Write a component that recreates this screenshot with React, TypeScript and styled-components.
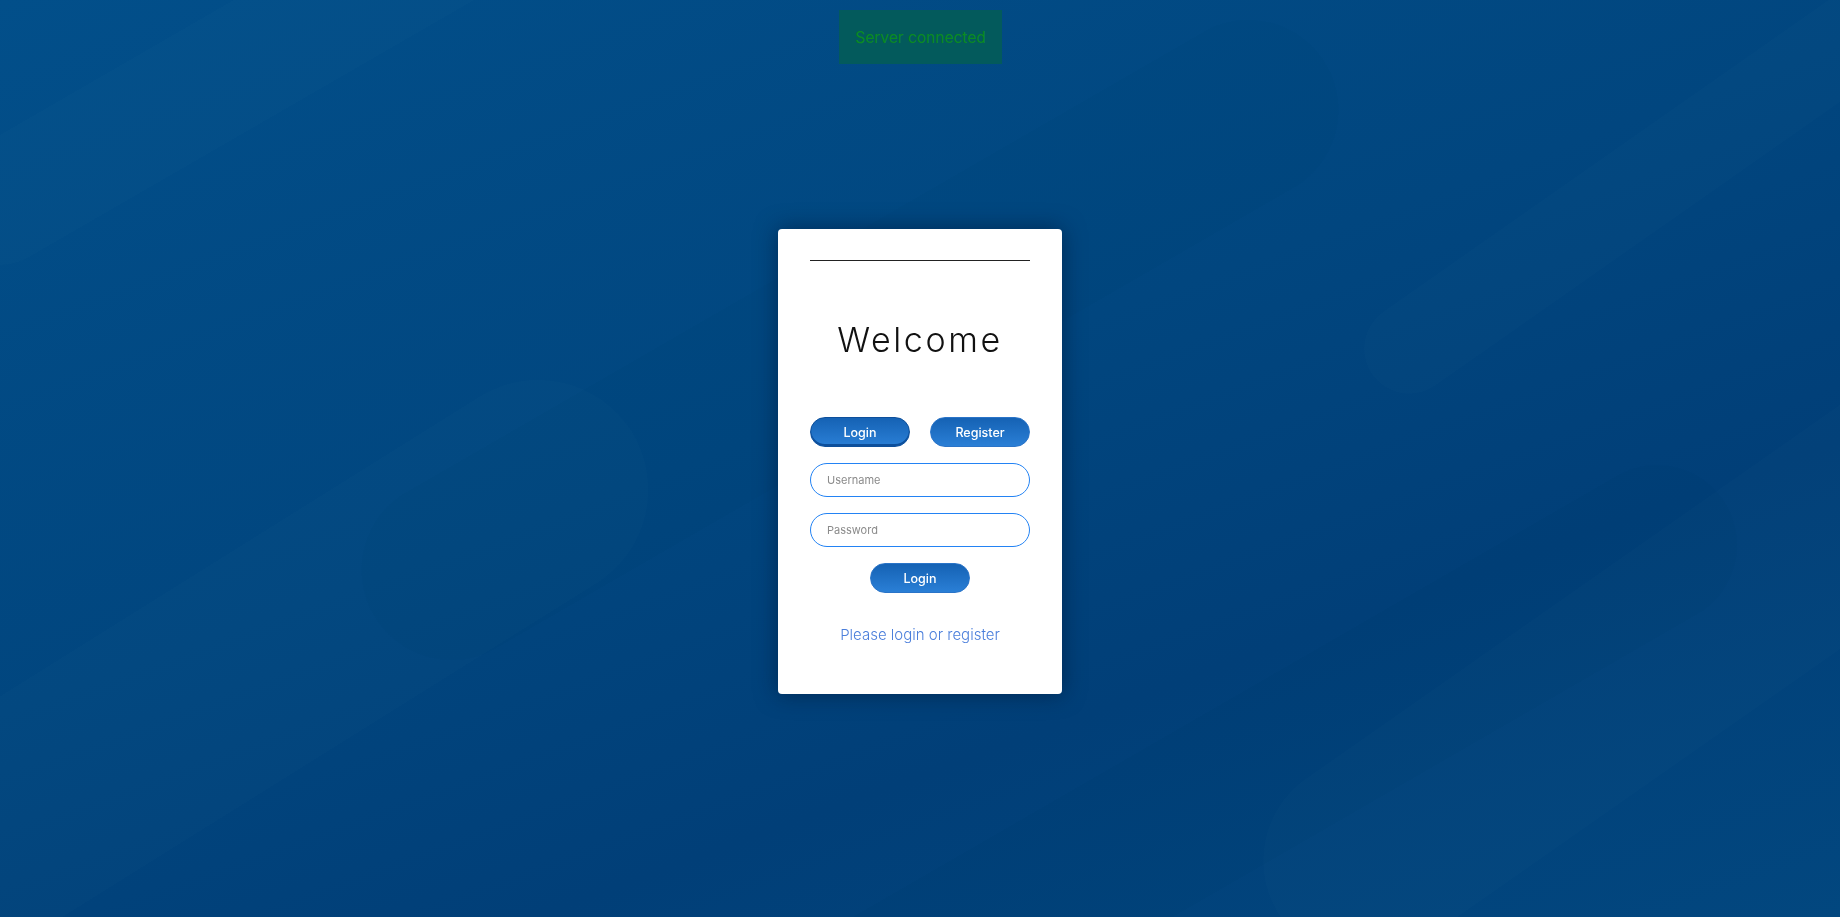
import React from "react";
import styled, { createGlobalStyle } from "styled-components";

const Global = createGlobalStyle`
  html, body { margin: 0; padding: 0; height: 100%; }
  body { font-family: Inter, "Noto Sans", sans-serif; background: #014884; }
  #root { min-height: 100vh; }
  * { box-sizing: border-box; }
`;

const Page = styled.div`
  position: relative;
  min-height: 100vh;
  overflow: hidden;
  padding-top: 6px;
  display: flex;
  align-items: center;
  justify-content: center;
  background: linear-gradient(160deg, #024f8a 0%, #01467f 45%, #013f78 70%, #02477f 100%);
`;

const Decor = styled.svg`
  position: absolute;
  inset: 0;
  width: 100%;
  height: 100%;
  pointer-events: none;
`;

const Toast = styled.div`
  position: absolute;
  top: 10px;
  left: calc(50% - 81px);
  width: 163px;
  height: 54px;
  display: flex;
  align-items: center;
  justify-content: center;
  background: #035a5c;
  color: #0b8b22;
  font-size: 15.5px;
  font-family: Inter, sans-serif;
  font-weight: 400;
`;

const Card = styled.div`
  position: relative;
  width: 284px;
  height: 465px;
  background: #fff;
  border-radius: 4px;
  padding: 31px 32px 0;
  box-shadow: 0 0 22px rgba(0, 20, 50, 0.55);
  display: flex;
  flex-direction: column;
`;

const Rule = styled.div`
  height: 1px;
  background: #222;
`;

const Title = styled.h1`
  margin: 59px 0 0;
  height: 40px;
  text-align: center;
  font-family: Inter, sans-serif;
  font-weight: 300;
  font-size: 34px;
  line-height: 40px;
  letter-spacing: 2.6px;
  color: #111;
`;

const Tabs = styled.div`
  margin-top: 57px;
  display: flex;
  justify-content: space-between;
`;

const PillButton = styled.button<{ $active?: boolean }>`
  width: 100px;
  height: 30px;
  border-radius: 15px;
  border: 1px solid ${(p) => (p.$active ? "#0d4f9b" : "#2a74c8")};
  background: linear-gradient(180deg, #1562b4 0%, #2a7fd6 100%);
  color: #fff;
  font-family: Inter, sans-serif;
  font-size: 12.5px;
  font-weight: 500;
  cursor: pointer;
  padding: 0;
  box-shadow: ${(p) => (p.$active ? "inset 0 -2px 0 #0d4f9b" : "none")};
`;

const Form = styled.div`
  margin-top: 16px;
  display: flex;
  flex-direction: column;
  gap: 16px;
`;

const Input = styled.input`
  width: 100%;
  height: 34px;
  border-radius: 17px;
  border: 1px solid #2383f4;
  padding: 0 16px;
  font-family: Inter, sans-serif;
  font-size: 11px;
  outline: none;
  &::placeholder { color: #8a8a8a; }
`;

const SubmitRow = styled.div`
  margin-top: 16px;
  display: flex;
  justify-content: center;
`;

const Hint = styled.p`
  margin: 32px 0 0;
  text-align: center;
  font-family: Inter, sans-serif;
  font-weight: 300;
  font-size: 15px;
  line-height: 20px;
  color: #4a7edb;
`;

export default function App() {
  return (
    <>
      <Global />
      <Page>
        <Decor viewBox="0 0 1840 917" preserveAspectRatio="none">
          <g fill="#ffffff" opacity="0.012">
            <rect x="-200" y="560" width="900" height="220" rx="110" transform="rotate(-32 250 670)" />
            <rect x="1200" y="560" width="900" height="200" rx="100" transform="rotate(-35 1650 660)" />
            <rect x="1300" y="100" width="800" height="90" rx="45" transform="rotate(-35 1700 145)" />
            <rect x="-100" y="0" width="700" height="120" rx="60" transform="rotate(-30 250 60)" />
          </g>
          <g fill="#000000" opacity="0.015">
            <rect x="300" y="250" width="1100" height="180" rx="90" transform="rotate(-30 850 340)" />
            <rect x="700" y="700" width="1100" height="160" rx="80" transform="rotate(-30 1250 780)" />
          </g>
        </Decor>
        <Toast>Server connected</Toast>
        <Card>
          <Rule />
          <Title>Welcome</Title>
          <Tabs>
            <PillButton $active>Login</PillButton>
            <PillButton>Register</PillButton>
          </Tabs>
          <Form>
            <Input placeholder="Username" />
            <Input placeholder="Password" type="password" />
          </Form>
          <SubmitRow>
            <PillButton>Login</PillButton>
          </SubmitRow>
          <Hint>Please login or register</Hint>
        </Card>
      </Page>
    </>
  );
}
